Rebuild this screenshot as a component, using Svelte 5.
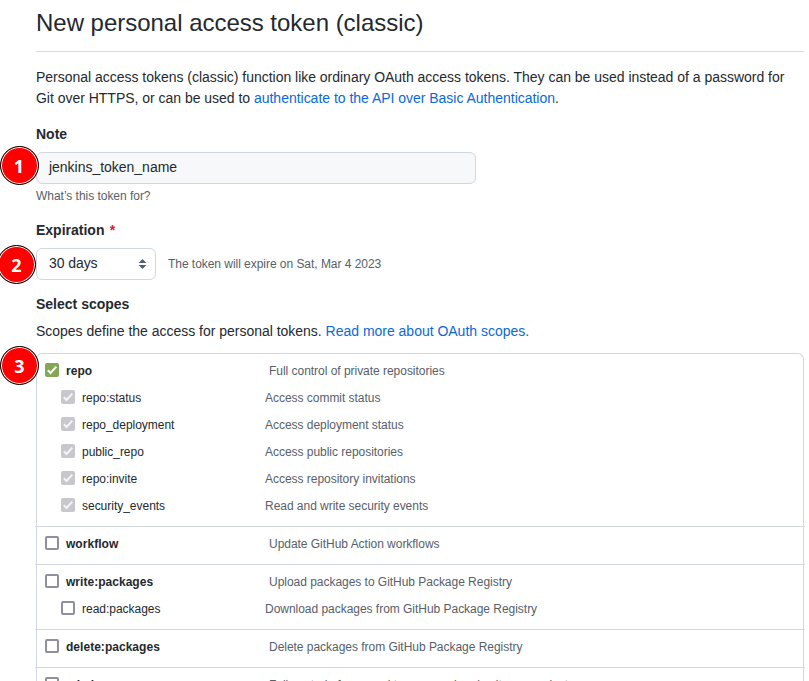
<script>
  const groups = [
    {
      name: 'repo', desc: 'Full control of private repositories', state: 'on',
      children: [
        ['repo:status', 'Access commit status'],
        ['repo_deployment', 'Access deployment status'],
        ['public_repo', 'Access public repositories'],
        ['repo:invite', 'Access repository invitations'],
        ['security_events', 'Read and write security events']
      ]
    },
    { name: 'workflow', desc: 'Update GitHub Action workflows', state: 'off', children: [] },
    {
      name: 'write:packages', desc: 'Upload packages to GitHub Package Registry', state: 'off',
      children: [['read:packages', 'Download packages from GitHub Package Registry']]
    },
    { name: 'delete:packages', desc: 'Delete packages from GitHub Package Registry', state: 'off', children: [] },
    { name: 'admin:org', desc: 'Full control of orgs and teams, read and write org projects', state: 'off', children: [] }
  ];
</script>

{#snippet box(state)}
  <span class="box {state}">
    {#if state !== 'off'}
      <svg viewBox="0 0 14 14" width="14" height="14"><path d="M2.8 7.3 5.6 10 11.3 3.7" fill="none" stroke="currentColor" stroke-width="2" /></svg>
    {/if}
  </span>
{/snippet}

<main>
  <h1>New personal access token (classic)</h1>
  <p class="intro">
    Personal access tokens (classic) function like ordinary OAuth access tokens. They can be used instead of a password for<br />
    Git over HTTPS, or can be used to <span class="link">authenticate to the API over Basic Authentication</span>.
  </p>

  <div class="label note-label">Note</div>
  <div class="anchor">
    <div class="input">jenkins_token_name</div>
    <span class="badge one">1</span>
  </div>
  <div class="hint">What’s this token for?</div>

  <div class="label exp-label">Expiration <span class="star">*</span></div>
  <div class="anchor exp">
    <div class="select">
      <span>30 days</span>
      <svg width="9" height="10" viewBox="0 0 9 10"><path d="M4.5 0 8.5 4H.5zM4.5 10 .5 6h8z" fill="#57606a" /></svg>
    </div>
    <span class="expires">The token will expire on Sat, Mar 4 2023</span>
    <span class="badge two">2</span>
  </div>

  <div class="label scopes-label">Select scopes</div>
  <p class="scopes-text">Scopes define the access for personal tokens. <span class="link">Read more about OAuth scopes.</span></p>

  <div class="anchor">
    <div class="scopes">
      {#each groups as g}
        <div class="group">
          <div class="row">
            {@render box(g.state)}
            <b>{g.name}</b>
            <span class="desc">{g.desc}</span>
          </div>
          {#each g.children as [name, desc]}
            <div class="row child">
              {@render box(g.state === 'on' ? 'disabled' : 'off')}
              <span class="name">{name}</span>
              <span class="desc">{desc}</span>
            </div>
          {/each}
        </div>
      {/each}
    </div>
    <span class="badge three">3</span>
  </div>
</main>

<style>
  :global(body) { margin: 0; background: #fff; overflow: hidden; }
  main {
    box-sizing: border-box;
    width: 809px;
    height: 681px;
    overflow: hidden;
    padding: 0 5px 0 36px;
    font: 14px/21px "Liberation Sans", Arial, sans-serif;
    letter-spacing: -0.02px;
    color: #24292f;
    background: #fff;
  }
  h1 {
    box-sizing: border-box;
    height: 52px;
    margin: 0;
    padding-top: 5px;
    font-size: 24px;
    line-height: 36px;
    font-weight: 400;
    border-bottom: 1px solid #d8dadd;
  }
  p { margin: 0; white-space: nowrap; }
  .intro { padding-top: 15px; }
  .link { color: #0969da; }
  .label { font-weight: 700; letter-spacing: 0; }
  .note-label { margin-top: 15px; margin-bottom: 7px; }
  .anchor { position: relative; }
  .input, .select {
    box-sizing: border-box;
    height: 32px;
    border: 1px solid #d0d7de;
    border-radius: 6px;
    line-height: 28px;
    padding: 0 12px;
  }
  .input { width: 440px; background: #f6f8fa; }
  .hint { margin-top: 3px; font-size: 12px; line-height: 18px; color: #57606a; letter-spacing: -0.03px; }
  .exp-label { margin-top: 15px; margin-bottom: 7px; }
  .star { margin-left: 1.5px; color: #cf222e; }
  .exp { display: flex; align-items: center; gap: 12px; }
  .select { width: 120px; padding-right: 8px; display: flex; align-items: center; justify-content: space-between; }
  .select span { padding-bottom: 2px; letter-spacing: -0.08px; }
  .expires { font-size: 12px; color: #57606a; letter-spacing: -0.04px; }
  .scopes-label { margin-top: 14px; }
  .scopes-text { margin: 6px 0 11px; letter-spacing: -0.015px; }
  .scopes { border: 1px solid #d0d7de; border-bottom: 0; border-radius: 6px 6px 0 0; font-size: 12px; }
  .group { padding: 3px 0 7px; }
  .group + .group { border-top: 1px solid #d0d7de; margin: 0 -2px; padding: 3px 2px 7px; }
  .row { box-sizing: border-box; display: flex; align-items: center; height: 27px; padding: 2px 0 0 8px; white-space: nowrap; }
  .row b, .name { margin-left: 7px; }
  .row b { width: 203px; letter-spacing: 0.03px; }
  .row.child { padding-left: 24px; }
  .name { width: 183px; }
  .desc { color: #57606a; letter-spacing: -0.03px; }
  .box { box-sizing: border-box; width: 14px; height: 14px; border-radius: 2px; margin-top: -3px; flex: none; }
  .box svg { display: block; }
  .off { border: 2px solid #8f8f9d; background: #fff; }
  .on { background: #84a757; color: #fff; }
  .disabled { background: #c7c7cd; color: #f4f4f6; }
  .badge {
    position: absolute;
    box-sizing: border-box;
    width: 39px;
    height: 39px;
    border: 1.5px solid #000;
    border-radius: 50%;
    background: #f00;
    box-shadow: inset 0 0 0 1px #fff;
    color: #fff;
    font: 700 18px/38px "Open Sans", "Noto Sans", sans-serif;
    text-align: center;
  }
  .one { left: -36.5px; top: -6px; }
  .two { left: -39px; top: -3px; }
  .three { left: -36px; top: -7px; }
</style>
